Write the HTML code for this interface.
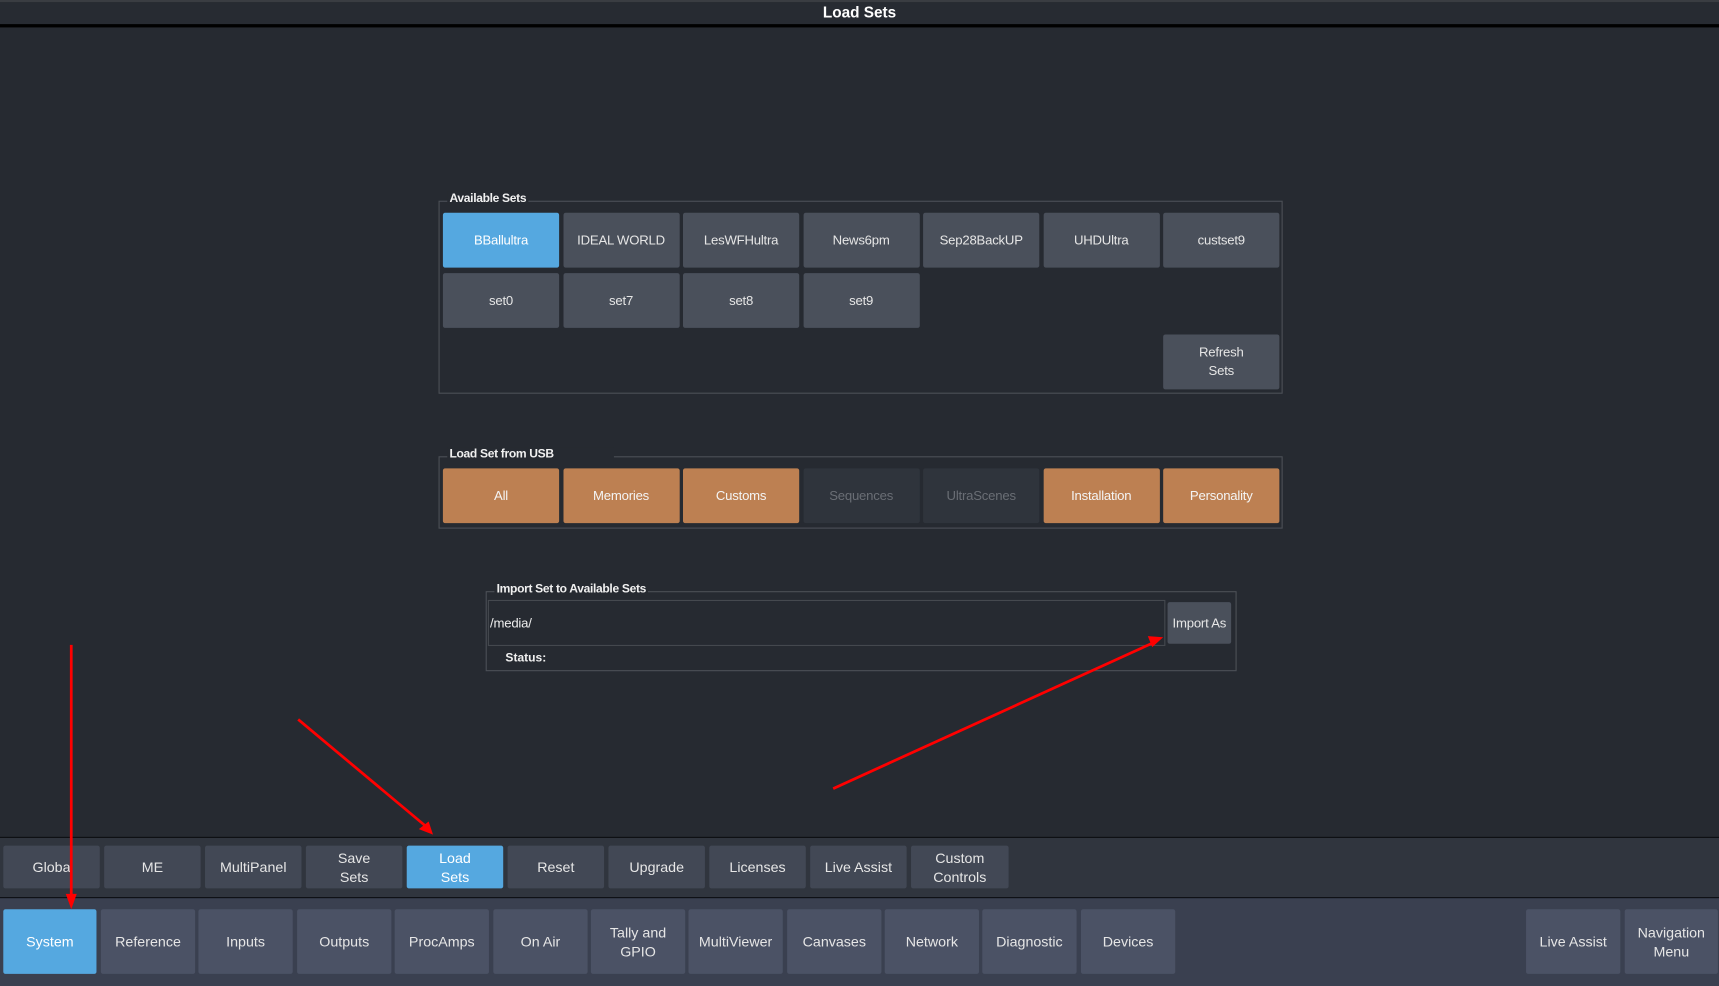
<!DOCTYPE html>
<html><head><meta charset="utf-8"><style>
*{box-sizing:border-box;margin:0;padding:0}
html,body{width:1719px;height:986px;overflow:hidden;background:#262a31}
#s{position:absolute;left:0;top:0;width:1568px;height:899px;transform-origin:0 0;transform:scale(1.09630,1.09677);background:#262a31;font-family:"Liberation Sans",sans-serif;color:#e8e8e8}
.a{position:absolute}
.b{position:absolute;display:flex;align-items:center;justify-content:center;text-align:center;border-radius:2px;font-size:13px;line-height:17px;background:#4a505b;color:#e6e6e6}
.n{font-size:12px;letter-spacing:-0.2px}
.bl{background:#55a8e0;color:#fff}
.or{background:#bd8052;color:#f4f4f4}
.ds{background:#2f343c;color:#6a6e75}
.box{position:absolute;border:1px solid #4c5057}
.lg{position:absolute;font-weight:bold;font-size:11px;letter-spacing:-0.3px;background:#262a31;padding:0 2px;line-height:12px;color:#f0f0f0}
.t{background:#424855}
.m{background:#4b5265}
</style></head><body><div id="s">
<div class="a" style="left:0;top:0;width:1568px;height:2px;background:#3a3d42"></div>
<div class="a" style="left:0;top:2px;width:1568px;height:20px;background:#272b32;text-align:center;font-weight:bold;font-size:14px;line-height:19px;color:#fff">Load Sets</div>
<div class="a" style="left:0;top:22px;width:1568px;height:3px;background:#000"></div>

<div class="box" style="left:400px;top:183px;width:770px;height:176px"></div>
<div class="lg" style="left:408px;top:175px">Available Sets</div>
<div class="b n bl" style="left:404px;top:194px;width:106px;height:50px">BBallultra</div>
<div class="b n" style="left:513.5px;top:194px;width:106px;height:50px">IDEAL WORLD</div>
<div class="b n" style="left:623px;top:194px;width:106px;height:50px">LesWFHultra</div>
<div class="b n" style="left:732.5px;top:194px;width:106px;height:50px">News6pm</div>
<div class="b n" style="left:842px;top:194px;width:106px;height:50px">Sep28BackUP</div>
<div class="b n" style="left:951.5px;top:194px;width:106px;height:50px">UHDUltra</div>
<div class="b n" style="left:1061px;top:194px;width:106px;height:50px">custset9</div>
<div class="b n" style="left:404px;top:249px;width:106px;height:50px">set0</div>
<div class="b n" style="left:513.5px;top:249px;width:106px;height:50px">set7</div>
<div class="b n" style="left:623px;top:249px;width:106px;height:50px">set8</div>
<div class="b n" style="left:732.5px;top:249px;width:106px;height:50px">set9</div>
<div class="b n" style="left:1061px;top:305px;width:106px;height:50px">Refresh<br>Sets</div>

<div class="box" style="left:400px;top:416px;width:770px;height:66px"></div>
<div class="lg" style="left:408px;top:408px;padding-right:55px">Load Set from USB</div>
<div class="b n or" style="left:404px;top:427px;width:106px;height:50px">All</div>
<div class="b n or" style="left:513.5px;top:427px;width:106px;height:50px">Memories</div>
<div class="b n or" style="left:623px;top:427px;width:106px;height:50px">Customs</div>
<div class="b n ds" style="left:732.5px;top:427px;width:106px;height:50px">Sequences</div>
<div class="b n ds" style="left:842px;top:427px;width:106px;height:50px">UltraScenes</div>
<div class="b n or" style="left:951.5px;top:427px;width:106px;height:50px">Installation</div>
<div class="b n or" style="left:1061px;top:427px;width:106px;height:50px">Personality</div>

<div class="box" style="left:443px;top:539px;width:685px;height:73px"></div>
<div class="lg" style="left:451px;top:531px">Import Set to Available Sets</div>
<div class="box" style="left:445px;top:547px;width:618px;height:42px;border-color:#45494f"></div>
<div class="a n" style="left:447px;top:561px;color:#eee">/media/</div>
<div class="b n" style="left:1065px;top:549px;width:58px;height:38px">Import As</div>
<div class="a" style="left:461px;top:594px;font-weight:bold;font-size:11px;color:#f0f0f0">Status:</div>

<div class="a" style="left:0;top:763px;width:1568px;height:1px;background:#0b0d10"></div>
<div class="a" style="left:0;top:764px;width:1568px;height:54px;background:#30353e"></div>
<div class="a" style="left:0;top:818px;width:1568px;height:1px;background:#0b0d10"></div>
<div class="a" style="left:0;top:819px;width:1568px;height:80px;background:#3a4050"></div>

<div class="b t" style="left:3px;top:771px;width:88px;height:39px">Globa</div>
<div class="b t" style="left:95px;top:771px;width:88px;height:39px">ME</div>
<div class="b t" style="left:187px;top:771px;width:88px;height:39px">MultiPanel</div>
<div class="b t" style="left:279px;top:771px;width:88px;height:39px">Save<br>Sets</div>
<div class="b bl" style="left:371px;top:771px;width:88px;height:39px">Load<br>Sets</div>
<div class="b t" style="left:463px;top:771px;width:88px;height:39px">Reset</div>
<div class="b t" style="left:555px;top:771px;width:88px;height:39px">Upgrade</div>
<div class="b t" style="left:647px;top:771px;width:88px;height:39px">Licenses</div>
<div class="b t" style="left:739px;top:771px;width:88px;height:39px">Live Assist</div>
<div class="b t" style="left:831px;top:771px;width:89px;height:39px">Custom<br>Controls</div>

<div class="b bl" style="left:3px;top:829px;width:85px;height:59px">System</div>
<div class="b m" style="left:92px;top:829px;width:86px;height:59px">Reference</div>
<div class="b m" style="left:181px;top:829px;width:86px;height:59px">Inputs</div>
<div class="b m" style="left:271px;top:829px;width:86px;height:59px">Outputs</div>
<div class="b m" style="left:360px;top:829px;width:86px;height:59px">ProcAmps</div>
<div class="b m" style="left:450px;top:829px;width:86px;height:59px">On Air</div>
<div class="b m" style="left:539px;top:829px;width:86px;height:59px">Tally and<br>GPIO</div>
<div class="b m" style="left:628px;top:829px;width:86px;height:59px">MultiViewer</div>
<div class="b m" style="left:718px;top:829px;width:86px;height:59px">Canvases</div>
<div class="b m" style="left:807px;top:829px;width:86px;height:59px">Network</div>
<div class="b m" style="left:896px;top:829px;width:86px;height:59px">Diagnostic</div>
<div class="b m" style="left:986px;top:829px;width:86px;height:59px">Devices</div>
<div class="b m" style="left:1392px;top:829px;width:86px;height:59px">Live Assist</div>
<div class="b m" style="left:1482px;top:829px;width:85px;height:59px">Navigation<br>Menu</div>

<svg class="a" style="left:0;top:0" width="1568" height="899">
<g stroke="#f00" stroke-width="2.5" fill="#f00">
<line x1="65" y1="588" x2="65" y2="818"/><polygon points="60,815 70,815 65,829" stroke="none"/>
<line x1="272" y1="656" x2="388" y2="753"/><polygon points="382,756 391,749 395,761" stroke="none"/>
<line x1="760" y1="719" x2="1052" y2="586"/><polygon points="1047,580 1051,590 1061,581" stroke="none"/>
</g></svg>
</div></body></html>
